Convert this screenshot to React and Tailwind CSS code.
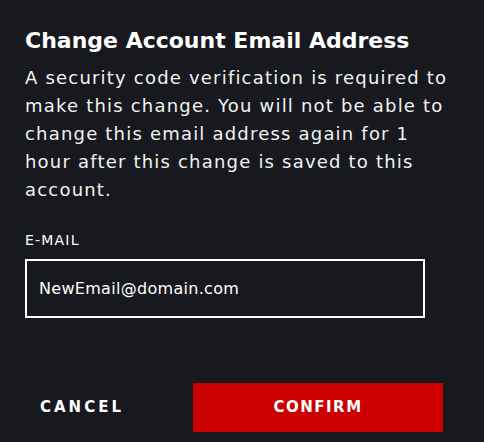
export default function App() {
  return (
    <div className="w-[484px] h-[442px] bg-[#18191e] text-white font-['DejaVu_Sans',sans-serif] overflow-hidden">
      <div className="px-[25px] pt-[27px]">
        <h2 className="text-[22px] leading-[28px] font-bold">Change Account Email Address</h2>
        <p className="mt-[9px] text-[18px] leading-[28px] tracking-[1.2px] text-[#f2f2f2] whitespace-nowrap">
          A security code verification is required to<br />
          make this change. You will not be able to<br />
          change this email address again for 1<br />
          hour after this change is saved to this<br />
          account.
        </p>
        <div className="mt-[28px] text-[14px] leading-[16px] font-medium tracking-[1.2px]">E-MAIL</div>
        <div className="mt-[11px] w-[400px] h-[59px] border-2 border-white flex items-center px-[12px] text-[16px] tracking-[0.3px]">
          NewEmail@domain.com
        </div>
      </div>
      <div className="mt-[65px] flex items-center pl-[25px]">
        <button className="w-[114px] text-[15px] font-bold tracking-[3px] text-white">CANCEL</button>
        <button className="ml-[54px] w-[250px] h-[49px] bg-[#cc0000] text-[15px] font-bold tracking-[1.5px] text-white">CONFIRM</button>
      </div>
    </div>
  )
}
